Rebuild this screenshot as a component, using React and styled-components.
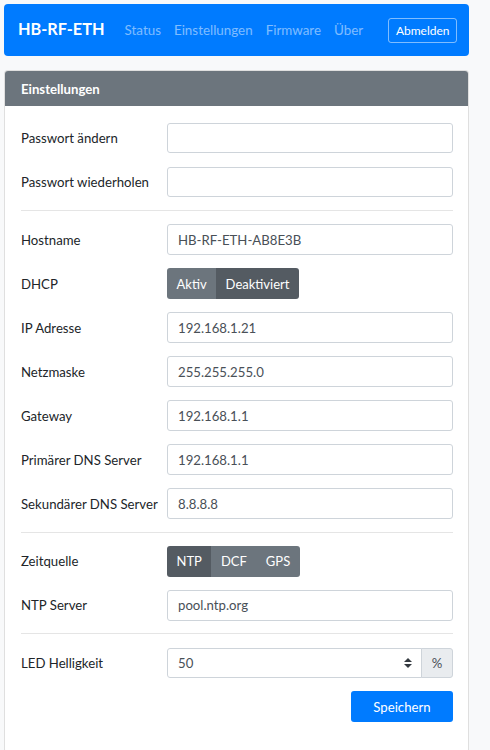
import styled, { createGlobalStyle } from "styled-components";

const GlobalStyle = createGlobalStyle`
  html, body {
    margin: 0;
    padding: 0;
    overflow: hidden;
  }
  body {
    background: #f8f9fa;
    font-family: Lato, "Open Sans", sans-serif;
    font-size: 13.2px;
    color: #212529;
  }
`;

const Page = styled.div`
  box-sizing: border-box;
  height: 750px;
  padding: 4px 21px 0 4px;
`;

const Navbar = styled.nav`
  box-sizing: border-box;
  display: flex;
  align-items: center;
  height: 52px;
  padding: 0 12px 0 14px;
  background: #007bff;
  border-radius: 4px;
`;

const Brand = styled.span`
  font-size: 16.3px;
  font-weight: 700;
  color: #fff;
  white-space: nowrap;
  margin-right: 20px;
  margin-top: -3px;
`;

const NavLinks = styled.div`
  flex: 1;
  display: flex;
  gap: 13px;
  white-space: nowrap;
`;

const NavLink = styled.a`
  color: rgba(255, 255, 255, 0.5);
  font-size: 13.4px;
  text-decoration: none;
`;

const LogoutButton = styled.button`
  height: 25px;
  padding: 0 6.5px;
  background: transparent;
  border: 1px solid rgba(255, 255, 255, 0.5);
  border-radius: 3px;
  color: #fff;
  font-family: inherit;
  font-size: 12px;
  white-space: nowrap;
`;

const Card = styled.section`
  margin-top: 14px;
  background: #fff;
  border: 1px solid rgba(0, 0, 0, 0.125);
  border-radius: 4px;
  overflow: hidden;
`;

const CardHeader = styled.div`
  display: flex;
  align-items: center;
  height: 35px;
  padding: 0 16px;
  background: #6c757d;
  color: #fff;
  font-weight: 700;
`;

const CardBody = styled.div`
  padding: 16.9px 15px 30px 16px;
`;

const Row = styled.div`
  display: grid;
  grid-template-columns: 146px 1fr;
  align-items: center;
  height: 30.6px;
  margin-bottom: 13.4px;
`;

const Label = styled.label`
  color: #212529;
  white-space: nowrap;
`;

const Input = styled.input`
  box-sizing: border-box;
  width: 100%;
  height: 30.6px;
  padding: 0 10px;
  border: 1px solid #ced4da;
  border-radius: 3px;
  font-family: inherit;
  font-size: 13.2px;
  color: #495057;
  outline: none;
`;

const Divider = styled.hr`
  margin: -0.6px 0 13.2px;
  border: 0;
  border-top: 1px solid rgba(0, 0, 0, 0.1);
`;

const ButtonGroup = styled.div`
  display: flex;
  height: 30.6px;
  justify-self: start;
  border-radius: 3px;
  overflow: hidden;
`;

const ToggleButton = styled.button`
  padding: 0 9.5px;
  border: 0;
  background: ${(props) => (props.$active ? "#545b62" : "#6c757d")};
  color: #fff;
  font-family: inherit;
  font-size: 13px;
`;

const InputGroup = styled.div`
  display: flex;
  height: 30.6px;
`;

const SelectBox = styled.div`
  box-sizing: border-box;
  flex: 1;
  display: flex;
  align-items: center;
  justify-content: space-between;
  padding: 0 9px 0 10px;
  border: 1px solid #ced4da;
  border-radius: 3px 0 0 3px;
  color: #495057;
`;

const Addon = styled.span`
  box-sizing: border-box;
  display: flex;
  align-items: center;
  justify-content: center;
  width: 32px;
  margin-left: -1px;
  background: #e9ecef;
  border: 1px solid #ced4da;
  border-radius: 0 3px 3px 0;
  color: #495057;
`;

const Actions = styled.div`
  display: flex;
  justify-content: flex-end;
`;

const PrimaryButton = styled.button`
  width: 102px;
  height: 30.6px;
  border: 0;
  border-radius: 3px;
  background: #007bff;
  color: #fff;
  font-family: inherit;
  font-size: 13.2px;
`;

function SelectArrow() {
  return (
    <svg width="8" height="10" viewBox="0 0 4 5">
      <path d="M2 0L0 2h4zm0 5L0 3h4z" fill="#343a40" />
    </svg>
  );
}

function Field({ label, value = "", type = "text" }) {
  return (
    <Row>
      <Label>{label}</Label>
      <Input type={type} defaultValue={value} />
    </Row>
  );
}

function Toggle({ label, options, active }) {
  return (
    <Row>
      <Label>{label}</Label>
      <ButtonGroup>
        {options.map((o) => (
          <ToggleButton key={o} $active={o === active}>
            {o}
          </ToggleButton>
        ))}
      </ButtonGroup>
    </Row>
  );
}

export default function App() {
  return (
    <Page>
      <GlobalStyle />
      <Navbar>
        <Brand>HB-RF-ETH</Brand>
        <NavLinks>
          <NavLink>Status</NavLink>
          <NavLink>Einstellungen</NavLink>
          <NavLink>Firmware</NavLink>
          <NavLink>Über</NavLink>
        </NavLinks>
        <LogoutButton>Abmelden</LogoutButton>
      </Navbar>

      <Card>
        <CardHeader>Einstellungen</CardHeader>
        <CardBody>
          <Field label="Passwort ändern" type="password" />
          <Field label="Passwort wiederholen" type="password" />
          <Divider />
          <Field label="Hostname" value="HB-RF-ETH-AB8E3B" />
          <Toggle label="DHCP" options={["Aktiv", "Deaktiviert"]} active="Deaktiviert" />
          <Field label="IP Adresse" value="192.168.1.21" />
          <Field label="Netzmaske" value="255.255.255.0" />
          <Field label="Gateway" value="192.168.1.1" />
          <Field label="Primärer DNS Server" value="192.168.1.1" />
          <Field label="Sekundärer DNS Server" value="8.8.8.8" />
          <Divider />
          <Toggle label="Zeitquelle" options={["NTP", "DCF", "GPS"]} active="NTP" />
          <Field label="NTP Server" value="pool.ntp.org" />
          <Divider />
          <Row>
            <Label>LED Helligkeit</Label>
            <InputGroup>
              <SelectBox>
                <span>50</span>
                <SelectArrow />
              </SelectBox>
              <Addon>%</Addon>
            </InputGroup>
          </Row>
          <Actions>
            <PrimaryButton>Speichern</PrimaryButton>
          </Actions>
        </CardBody>
      </Card>
    </Page>
  );
}
